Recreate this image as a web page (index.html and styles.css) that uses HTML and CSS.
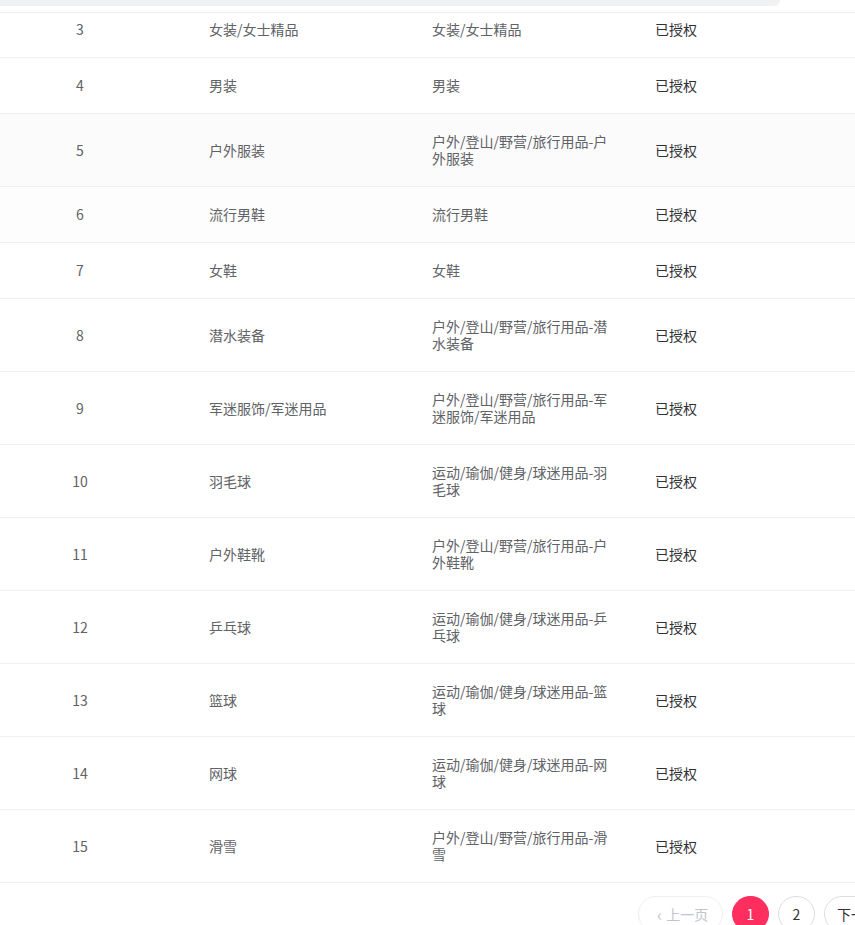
FILE: index.html
```html
<!DOCTYPE html>
<html lang="zh-CN">
<head>
<meta charset="utf-8">
<title>类目授权</title>
<link rel="stylesheet" href="styles.css">
</head>
<body>
<div class="page">
  <div class="top-strip">
    <div class="scroll-thumb"></div>
  </div>
  <div class="table">
    <div class="row row-first">
      <div class="cell c-idx">3</div>
      <div class="cell c-name">女装/女士精品</div>
      <div class="cell c-path">女装/女士精品</div>
      <div class="cell c-status">已授权</div>
    </div>
    <div class="row">
      <div class="cell c-idx">4</div>
      <div class="cell c-name">男装</div>
      <div class="cell c-path">男装</div>
      <div class="cell c-status">已授权</div>
    </div>
    <div class="row row-grey">
      <div class="cell c-idx">5</div>
      <div class="cell c-name">户外服装</div>
      <div class="cell c-path">户外/登山/野营/旅行用品-户外服装</div>
      <div class="cell c-status">已授权</div>
    </div>
    <div class="row row-light">
      <div class="cell c-idx">6</div>
      <div class="cell c-name">流行男鞋</div>
      <div class="cell c-path">流行男鞋</div>
      <div class="cell c-status">已授权</div>
    </div>
    <div class="row">
      <div class="cell c-idx">7</div>
      <div class="cell c-name">女鞋</div>
      <div class="cell c-path">女鞋</div>
      <div class="cell c-status">已授权</div>
    </div>
    <div class="row">
      <div class="cell c-idx">8</div>
      <div class="cell c-name">潜水装备</div>
      <div class="cell c-path">户外/登山/野营/旅行用品-潜水装备</div>
      <div class="cell c-status">已授权</div>
    </div>
    <div class="row">
      <div class="cell c-idx">9</div>
      <div class="cell c-name">军迷服饰/军迷用品</div>
      <div class="cell c-path">户外/登山/野营/旅行用品-军迷服饰/军迷用品</div>
      <div class="cell c-status">已授权</div>
    </div>
    <div class="row">
      <div class="cell c-idx">10</div>
      <div class="cell c-name">羽毛球</div>
      <div class="cell c-path">运动/瑜伽/健身/球迷用品-羽毛球</div>
      <div class="cell c-status">已授权</div>
    </div>
    <div class="row">
      <div class="cell c-idx">11</div>
      <div class="cell c-name">户外鞋靴</div>
      <div class="cell c-path">户外/登山/野营/旅行用品-户外鞋靴</div>
      <div class="cell c-status">已授权</div>
    </div>
    <div class="row">
      <div class="cell c-idx">12</div>
      <div class="cell c-name">乒乓球</div>
      <div class="cell c-path">运动/瑜伽/健身/球迷用品-乒乓球</div>
      <div class="cell c-status">已授权</div>
    </div>
    <div class="row">
      <div class="cell c-idx">13</div>
      <div class="cell c-name">篮球</div>
      <div class="cell c-path">运动/瑜伽/健身/球迷用品-篮球</div>
      <div class="cell c-status">已授权</div>
    </div>
    <div class="row">
      <div class="cell c-idx">14</div>
      <div class="cell c-name">网球</div>
      <div class="cell c-path">运动/瑜伽/健身/球迷用品-网球</div>
      <div class="cell c-status">已授权</div>
    </div>
    <div class="row">
      <div class="cell c-idx">15</div>
      <div class="cell c-name">滑雪</div>
      <div class="cell c-path">户外/登山/野营/旅行用品-滑雪</div>
      <div class="cell c-status">已授权</div>
    </div>
  </div>
  <div class="pagination">
    <button class="pg-btn pg-text pg-prev pg-disabled"><span class="chev">‹</span>上一页</button>
    <button class="pg-btn pg-num pg-active">1</button>
    <button class="pg-btn pg-num">2</button>
    <button class="pg-btn pg-text pg-next">下一页<span class="chev">›</span></button>
  </div>
</div>
</body>
</html>
```
FILE: styles.css
```css
html, body {
  margin: 0;
  padding: 0;
  overflow: hidden;
  background: #ffffff;
}
body {
  font-family: "Noto Sans CJK SC", "Noto Sans", sans-serif;
  font-size: 14px;
  color: #606266;
}
.page {
  width: 855px;
}
.top-strip {
  height: 12px;
  border-bottom: 1px solid #eceef1;
}
.scroll-thumb {
  width: 780px;
  height: 6px;
  background: #f0f1f3;
  border-bottom-right-radius: 8px;
}
.table {
  display: flex;
  flex-direction: column;
}
.row {
  display: grid;
  grid-template-columns: 197px 223px 223px 1fr;
  align-items: center;
  border-bottom: 1px solid #eeeff2;
  padding: 19px 0;
  line-height: 17px;
}
.row-first {
  padding: 8px 0 19px;
}
.row-grey {
  background: #fbfbfb;
}
.row-light {
  background: #fdfdfd;
}
.cell {
  padding: 0 24px 0 12px;
}
.c-idx {
  padding: 0 37px 0 0;
  text-align: center;
}
.c-status {
  color: #303133;
}
.pagination {
  display: flex;
  gap: 9px;
  padding: 13px 0 0 638px;
  white-space: nowrap;
}
.pg-btn {
  flex: none;
  height: 36px;
  border: 1px solid #dcdde3;
  background: #ffffff;
  border-radius: 18px;
  font-family: inherit;
  font-size: 14px;
  color: #303133;
  padding: 0;
  display: flex;
  align-items: center;
  justify-content: center;
}
.pg-num {
  width: 37px;
}
.pg-text {
  width: 85px;
  gap: 4px;
  justify-content: flex-start;
}
.pg-prev {
  padding-left: 18px;
}
.pg-next {
  padding-left: 12px;
}
.pg-disabled {
  color: #c0c4cc;
  border-color: #eceef1;
}
.pg-active {
  background: #ff2e5e;
  border-color: #ff2e5e;
  color: #ffffff;
}
.chev {
  font-size: 17px;
  line-height: 1;
  position: relative;
  top: -1px;
}
```
